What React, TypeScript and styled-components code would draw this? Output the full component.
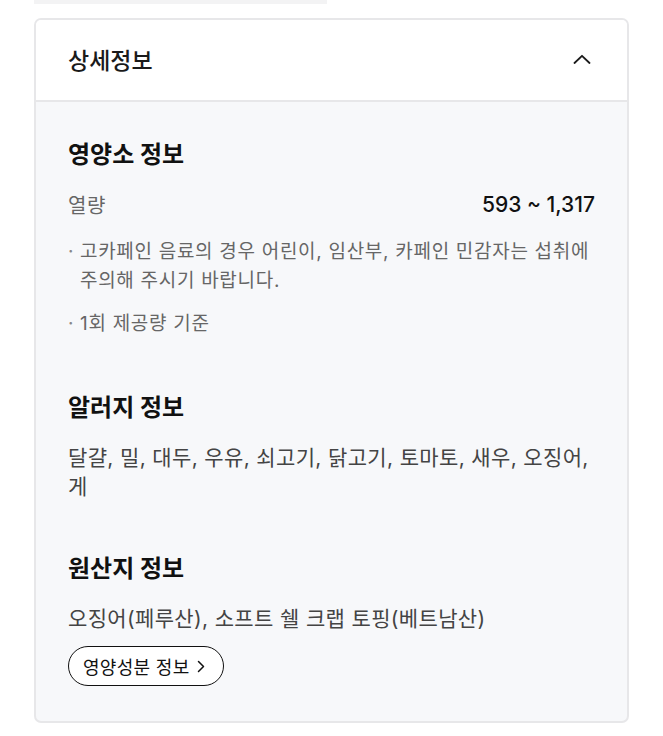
import React from "react";
import styled, { createGlobalStyle } from "styled-components";

const Global = createGlobalStyle`
  html, body { margin: 0; padding: 0; background: #ffffff; }
  body { font-family: Inter, "Noto Sans CJK KR", "Noto Sans", sans-serif; -webkit-font-smoothing: antialiased; }
  * { box-sizing: border-box; }
`;

const Page = styled.div`
  width: 663px;
  padding: 0 34px 14px;
`;

const TopStrip = styled.div`
  width: 293px;
  height: 4px;
  background: #f3f3f4;
`;

const Card = styled.section`
  margin-top: 14px;
  border: 2px solid #e7e7e9;
  border-radius: 7px;
  overflow: hidden;
  background: #f7f8fa;
`;

const Header = styled.div`
  height: 82px;
  display: flex;
  align-items: center;
  justify-content: space-between;
  padding: 0 36px 2px 32px;
  background: #ffffff;
  border-bottom: 2px solid #e7e7e9;
`;

const HeaderTitle = styled.h2`
  margin: 0;
  font-size: 23px;
  font-weight: 500;
  color: #1a1a1a;
  letter-spacing: 0;
`;

const Body = styled.div`
  padding: 37px 32px 35px;
  display: flex;
  flex-direction: column;
`;

const SectionTitle = styled.h3<{ $top?: number }>`
  margin: ${(p) => p.$top ?? 0}px 0 0;
  font-size: 24px;
  line-height: 32px;
  font-weight: 700;
  color: #111111;
  letter-spacing: 0;
`;

const NutriRow = styled.div`
  margin-top: 18px;
  display: flex;
  justify-content: space-between;
  align-items: center;
  height: 30px;
`;

const Label = styled.span`
  font-size: 20px;
  color: #666666;
  letter-spacing: 0.5px;
`;

const Value = styled.span`
  font-size: 21px;
  font-weight: 500;
  color: #111111;
  letter-spacing: 0;
`;

const NoteList = styled.ul`
  list-style: none;
  margin: 18px 0 0;
  padding: 0;
  display: flex;
  flex-direction: column;
  gap: 14px;
`;

const Note = styled.li`
  position: relative;
  padding-left: 12px;
  font-size: 19px;
  line-height: 29px;
  color: #666666;
  letter-spacing: 0.7px;
  &::before {
    content: "·";
    position: absolute;
    left: 0;
    top: 0;
    color: #888888;
  }
`;

const Text = styled.p`
  margin: 19px 0 0;
  font-size: 21px;
  line-height: 29px;
  color: #444444;
  letter-spacing: 0.35px;
`;

const PillButton = styled.button`
  margin-top: 13px;
  align-self: flex-start;
  height: 40px;
  padding: 0 18px 0 14px;
  border: 1.8px solid #111111;
  border-radius: 20px;
  background: #ffffff;
  font-family: inherit;
  font-size: 18px;
  color: #111111;
  letter-spacing: 0.3px;
  display: flex;
  align-items: center;
  gap: 7px;
`;

const Chevron = ({ up }: { up?: boolean }) => (
  <svg width="18" height="10" viewBox="0 0 18 10" fill="none">
    <path
      d={up ? "M1.5 9 L9 1.8 L16.5 9" : "M1.5 1 L9 8.2 L16.5 1"}
      stroke="#1a1a1a"
      strokeWidth="1.8"
      strokeLinecap="round"
      strokeLinejoin="round"
    />
  </svg>
);

const SmallArrow = () => (
  <svg width="8" height="13" viewBox="0 0 8 13" fill="none">
    <path d="M1.5 1.5 L6.5 6.5 L1.5 11.5" stroke="#111" strokeWidth="1.5" strokeLinecap="round" strokeLinejoin="round" />
  </svg>
);

export default function App() {
  return (
    <Page>
      <Global />
      <TopStrip />
      <Card>
        <Header>
          <HeaderTitle>상세정보</HeaderTitle>
          <Chevron up />
        </Header>
        <Body>
          <SectionTitle>영양소 정보</SectionTitle>
          <NutriRow>
            <Label>열량</Label>
            <Value>593 ~ 1,317</Value>
          </NutriRow>
          <NoteList>
            <Note>고카페인 음료의 경우 어린이, 임산부, 카페인 민감자는 섭취에 주의해 주시기 바랍니다.</Note>
            <Note>1회 제공량 기준</Note>
          </NoteList>

          <SectionTitle $top={54}>알러지 정보</SectionTitle>
          <Text>달걀, 밀, 대두, 우유, 쇠고기, 닭고기, 토마토, 새우, 오징어, 게</Text>

          <SectionTitle $top={52}>원산지 정보</SectionTitle>
          <Text>오징어(페루산), 소프트 쉘 크랩 토핑(베트남산)</Text>
          <PillButton>
            영양성분 정보
            <SmallArrow />
          </PillButton>
        </Body>
      </Card>
    </Page>
  );
}
